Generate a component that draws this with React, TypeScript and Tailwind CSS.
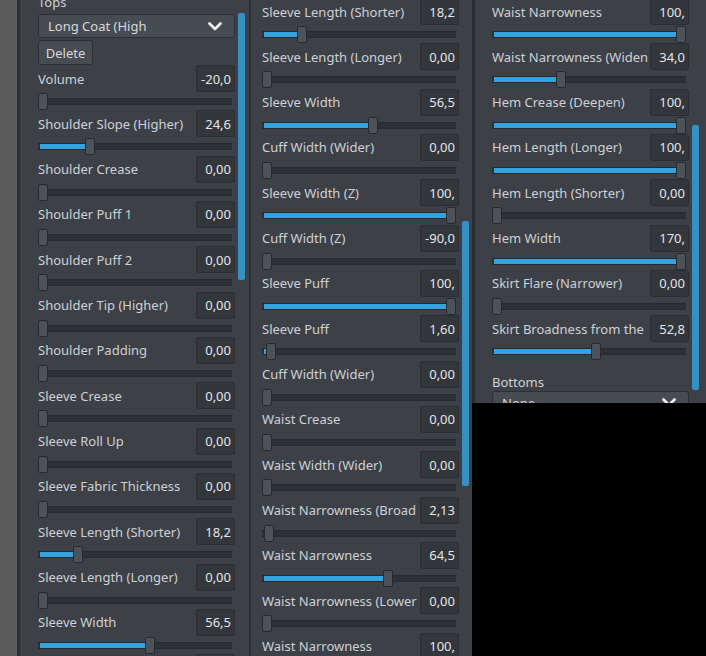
import React from 'react';

type Row = { label: string; value: string; frac: number };

const leftRows: Row[] = [
  { label: 'Volume', value: '-20,0', frac: 0 },
  { label: 'Shoulder Slope (Higher)', value: '24,6', frac: 0.255 },
  { label: 'Shoulder Crease', value: '0,00', frac: 0 },
  { label: 'Shoulder Puff 1', value: '0,00', frac: 0 },
  { label: 'Shoulder Puff 2', value: '0,00', frac: 0 },
  { label: 'Shoulder Tip (Higher)', value: '0,00', frac: 0 },
  { label: 'Shoulder Padding', value: '0,00', frac: 0 },
  { label: 'Sleeve Crease', value: '0,00', frac: 0 },
  { label: 'Sleeve Roll Up', value: '0,00', frac: 0 },
  { label: 'Sleeve Fabric Thickness', value: '0,00', frac: 0 },
  { label: 'Sleeve Length (Shorter)', value: '18,2', frac: 0.19 },
  { label: 'Sleeve Length (Longer)', value: '0,00', frac: 0 },
  { label: 'Sleeve Width', value: '56,5', frac: 0.58 },
  { label: 'Cuff Width (Wider)', value: '0,00', frac: 0 },
];

const middleRows: Row[] = [
  { label: 'Sleeve Length (Shorter)', value: '18,2', frac: 0.19 },
  { label: 'Sleeve Length (Longer)', value: '0,00', frac: 0 },
  { label: 'Sleeve Width', value: '56,5', frac: 0.575 },
  { label: 'Cuff Width (Wider)', value: '0,00', frac: 0 },
  { label: 'Sleeve Width (Z)', value: '100,', frac: 1 },
  { label: 'Cuff Width (Z)', value: '-90,0', frac: 0 },
  { label: 'Sleeve Puff', value: '100,', frac: 1 },
  { label: 'Sleeve Puff', value: '1,60', frac: 0.02 },
  { label: 'Cuff Width (Wider)', value: '0,00', frac: 0 },
  { label: 'Waist Crease', value: '0,00', frac: 0 },
  { label: 'Waist Width (Wider)', value: '0,00', frac: 0 },
  { label: 'Waist Narrowness (Broad', value: '2,13', frac: 0.01 },
  { label: 'Waist Narrowness', value: '64,5', frac: 0.66 },
  { label: 'Waist Narrowness (Lower', value: '0,00', frac: 0 },
  { label: 'Waist Narrowness', value: '100,', frac: 1 },
];

const rightRows: Row[] = [
  { label: 'Waist Narrowness', value: '100,', frac: 1 },
  { label: 'Waist Narrowness (Widen', value: '34,0', frac: 0.35 },
  { label: 'Hem Crease (Deepen)', value: '100,', frac: 1 },
  { label: 'Hem Length (Longer)', value: '100,', frac: 1 },
  { label: 'Hem Length (Shorter)', value: '0,00', frac: 0 },
  { label: 'Hem Width', value: '170,', frac: 1 },
  { label: 'Skirt Flare (Narrower)', value: '0,00', frac: 0 },
  { label: 'Skirt Broadness from the', value: '52,8', frac: 0.54 },
];

function Chevron() {
  return (
    <svg width="14" height="9" viewBox="0 0 14 9" className="shrink-0">
      <polyline points="1.5,1.5 7,7 12.5,1.5" fill="none" stroke="#f2f2f2" strokeWidth="2.6" strokeLinecap="round" strokeLinejoin="round" />
    </svg>
  );
}

function Dropdown({ text }: { text: string }) {
  return (
    <div className="flex h-[24px] shrink-0 items-center justify-between overflow-hidden rounded-[3px] border border-[#2c2f34] bg-[#474b52] pl-[9px] pr-[12px] text-[#d6d8db]">
      <span className="overflow-hidden whitespace-nowrap">{text}</span>
      <Chevron />
    </div>
  );
}

// label + value box on top, slider track below
function SliderRow({ label, value, frac }: Row) {
  const pos = Math.round(frac * 184);
  return (
    <div className="h-[45.33px] shrink-0">
      <div className="flex h-[27px] items-center">
        <span className="flex-1 overflow-hidden whitespace-nowrap text-[#cdd0d4]">{label}</span>
        <div className="ml-[2px] flex h-[27px] w-[39px] shrink-0 items-center justify-end overflow-hidden whitespace-nowrap rounded-[2px] border border-[#2a2d32] bg-[#33363b] pr-[3px] text-[#e4e5e7]">
          {value}
        </div>
      </div>
      <div className="pt-[6px]">
        <div className="relative mr-[3px] h-[7px] border-y border-[#26292d] bg-[#2d3035]">
          {pos > 2 && (
            <div className="absolute left-[2px] top-0 h-full bg-[#35a2dc]" style={{ width: pos - 2 }} />
          )}
          <div
            className="absolute top-[-6px] h-[17px] w-[10px] rounded-[2px] border border-[#26292d] bg-[#4d5158]"
            style={{ left: pos }}
          />
        </div>
      </div>
    </div>
  );
}

function Scrollbar({ top, height }: { top: string; height: string }) {
  return (
    <div className="ml-[3px] flex w-[7px] shrink-0 flex-col">
      <div className={`${top} ${height} shrink-0 rounded-[2px] bg-[#3591c3]`} />
    </div>
  );
}

export default function App() {
  return (
    <div className="flex h-[656px] w-[706px] overflow-hidden bg-black font-['Noto_Sans',sans-serif] text-[13px] leading-[18px]">
      <div className="w-[17px] shrink-0 bg-[#5b5b5b]" />
      <div className="w-[3px] shrink-0 bg-[#2b2e33]" />

      {/* left panel */}
      <div className="flex w-[229px] shrink-0 overflow-hidden bg-[#3d4147] pl-[18px]">
        <div className="flex w-[197px] shrink-0 flex-col">
          <div className="-mt-[7px] h-[18px] shrink-0 text-[#cdd0d4]">Tops</div>
          <div className="mt-[3px] shrink-0">
            <Dropdown text="Long Coat (High" />
          </div>
          <button className="mt-[2px] flex h-[25px] w-[55px] shrink-0 items-center justify-center rounded-[3px] border border-[#2c2f34] bg-[#474b52] text-[#d6d8db]">
            Delete
          </button>
          {leftRows.map((r, i) => (
            <SliderRow key={i} {...r} />
          ))}
        </div>
        <Scrollbar top="mt-[13px]" height="h-[267px]" />
      </div>

      <div className="w-[2px] shrink-0 bg-[#2b2e33]" />

      {/* middle panel */}
      <div className="flex w-[221px] shrink-0 overflow-hidden bg-[#3d4147] pl-[11px]">
        <div className="-mt-[2px] flex w-[197px] shrink-0 flex-col">
          {middleRows.map((r, i) => (
            <SliderRow key={i} {...r} />
          ))}
        </div>
        <Scrollbar top="mt-[221px]" height="h-[265px]" />
      </div>

      {/* right panel, cut off by the black area */}
      <div className="flex w-[234px] shrink-0 flex-col">
        <div className="flex h-[403px] shrink-0 overflow-hidden">
          <div className="w-[3px] shrink-0 bg-[#2b2e33]" />
          <div className="flex flex-1 bg-[#3d4147] pl-[17px]">
            <div className="-mt-[2px] flex w-[197px] shrink-0 flex-col">
              {rightRows.map((r, i) => (
                <SliderRow key={i} {...r} />
              ))}
              <div className="mt-[12px] h-[18px] shrink-0 text-[#cdd0d4]">Bottoms</div>
              <Dropdown text="None" />
            </div>
            <Scrollbar top="mt-[125px]" height="h-[265px]" />
          </div>
        </div>
        <div className="flex-1 bg-black" />
      </div>
    </div>
  );
}
